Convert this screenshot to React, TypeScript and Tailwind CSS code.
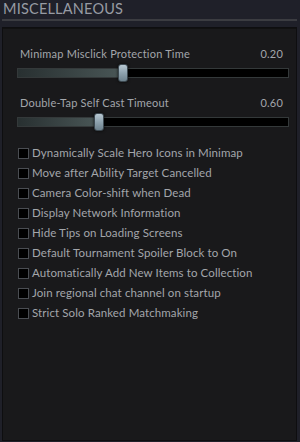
import React from 'react';

const font = { fontFamily: '"Lato", "Open Sans", sans-serif' };

function Slider({ label, value, pct }: { label: string; value: string; pct: number }) {
  return (
    <div className="flex flex-col">
      <div className="flex justify-between pl-[3px] pr-[13px] text-[11px] leading-[14px] text-[#a3a6ab] tracking-[0.2px]">
        <span>{label}</span>
        <span>{value}</span>
      </div>
      <div className="relative mt-[7px] h-[10px] w-[272px] border border-[#34393a] bg-black">
        <div
          className="h-full bg-gradient-to-r from-[#283031] to-[#4a5757]"
          style={{ width: `${pct}%` }}
        />
        <div
          className="absolute top-[-5px] h-[18px] w-[10px] rounded-[3px] border border-[#3c4850] bg-gradient-to-b from-[#b8c8d2] via-[#8ea2ae] to-[#6e828e] shadow-[0_0_3px_rgba(0,0,0,0.8)]"
          style={{ left: `calc(${pct}% - 5px)` }}
        />
      </div>
    </div>
  );
}

function Check({ label }: { label: string }) {
  return (
    <div className="flex h-[20px] items-center gap-[3px]">
      <div className="h-[11px] w-[11px] border border-[#4a4d52] bg-black" />
      <span className="text-[11.5px] leading-[14px] text-[#a3a6ab] tracking-[0.1px]">{label}</span>
    </div>
  );
}

const checks = [
  'Dynamically Scale Hero Icons in Minimap',
  'Move after Ability Target Cancelled',
  'Camera Color-shift when Dead',
  'Display Network Information',
  'Hide Tips on Loading Screens',
  'Default Tournament Spoiler Block to On',
  'Automatically Add New Items to Collection',
  'Join regional chat channel on startup',
  'Strict Solo Ranked Matchmaking',
];

export default function App() {
  return (
    <div className="flex h-[442px] w-[300px] flex-col bg-[#1f2029] px-[2px] pb-[1px]" style={font}>
      <div className="pl-[1px] text-[14.5px] leading-[17px] tracking-[0.2px] text-[#979ba3]">MISCELLANEOUS</div>
      <div className="mt-[2px] h-[2px] w-[295px] bg-[#3b3c41]" />
      <div className="mt-[6px] flex flex-1 flex-col border border-[#0e0e10] bg-[#19191b] pl-[14px] pt-[19px] mr-[1px] shadow-[inset_0_1px_0_#111]">
        <Slider label="Minimap Misclick Protection Time" value="0.20" pct={39} />
        <div className="h-[18px]" />
        <Slider label="Double-Tap Self Cast Timeout" value="0.60" pct={30} />
        <div className="mt-[16px] flex flex-col pl-[1px]">
          {checks.map((c) => (
            <Check key={c} label={c} />
          ))}
        </div>
      </div>
    </div>
  );
}
